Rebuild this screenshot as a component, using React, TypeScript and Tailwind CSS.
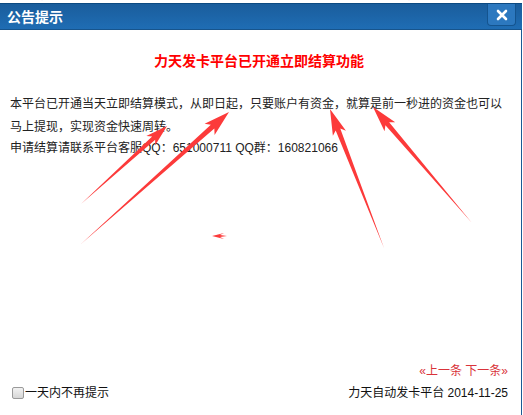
const arrows = [
  { tail: [81, 204], tip: [167, 126], head: 18, wing: 6.5 },
  { tail: [81, 244], tip: [229, 112], head: 22, wing: 7.5 },
  { tail: [384, 248], tip: [330, 109], head: 22, wing: 7 },
  { tail: [472, 223], tip: [373, 107], head: 22, wing: 7 },
  { tail: [227, 236], tip: [212, 236], head: 8, wing: 3 },
];

function arrowPoints(tail: number[], tip: number[], head: number, wing: number) {
  const dx = tip[0] - tail[0];
  const dy = tip[1] - tail[1];
  const len = Math.hypot(dx, dy);
  const ux = dx / len;
  const uy = dy / len;
  const nx = -uy;
  const ny = ux;
  const shaft = wing * 0.35;
  const bx = tip[0] - ux * head;
  const by = tip[1] - uy * head;
  const wx = tip[0] - ux * (head + 4);
  const wy = tip[1] - uy * (head + 4);
  const pts = [
    [tail[0], tail[1]],
    [bx + nx * shaft, by + ny * shaft],
    [wx + nx * wing, wy + ny * wing],
    [tip[0], tip[1]],
    [wx - nx * wing, wy - ny * wing],
    [bx - nx * shaft, by - ny * shaft],
  ];
  return pts.map((p) => p.join(",")).join(" ");
}

export default function App() {
  return (
    <div className="relative h-[415px] w-[523px] overflow-hidden bg-white font-['Liberation_Sans','Noto_Sans_CJK_SC',sans-serif] text-[12px] text-[#222]">
      {/* page behind the dialog, cut off */}
      <div className="h-[3px] overflow-hidden">
        <div className="-mt-[12px] flex whitespace-nowrap text-[12px] leading-[14px] text-black">
          <span className="w-[165px]">
            当前金额：<span className="text-[#f00]">1234</span> 元
          </span>
          <span className="w-[178px]">今日收入：1234 元</span>
          <span>上月结算金额：0 元</span>
        </div>
      </div>

      <div className="flex h-[412px] w-[522px] flex-col">
        <div className="flex h-[27px] items-start justify-between border-t border-b border-t-[#0c4a82] border-b-[#17548c] bg-gradient-to-b from-[#1a5d9c] to-[#1f6db4] pl-[7px] pr-[6px]">
          <span className="mt-[5px] text-[14px] font-bold leading-[16px] text-white">公告提示</span>
          <div className="flex h-[22px] w-[29px] items-center justify-center rounded-b-[4px] border border-t-0 border-[#14548f] bg-[#2c78bf]">
            <svg width="12" height="12" viewBox="0 0 12 12">
              <path d="M2 2 L10 10 M10 2 L2 10" stroke="white" strokeWidth="2.6" strokeLinecap="round" />
            </svg>
          </div>
        </div>

        <div className="flex flex-1 flex-col border-r border-[#1c5a94] pl-[10px] pr-[13px]">
          <div className="pt-[21px] text-center text-[14px] font-bold leading-[20px] text-[#f00]">
            力天发卡平台已开通立即结算功能
          </div>
          <p className="mt-[22px] leading-[23px]">
            本平台已开通当天立即结算模式，从即日起，只要账户有资金，就算是前一秒进的资金也可以马上提现，实现资金快速周转。
          </p>
          <div className="leading-[18px]">申请结算请联系平台客服QQ：651000711 QQ群：160821066</div>

          <div className="flex-1" />

          <div className="text-right leading-[18px] text-[#d9333a]">«上一条 下一条»</div>
          <div className="mt-[4px] mb-[13px] flex items-center justify-between leading-[18px]">
            <label className="flex items-center text-[#111]">
              <span className="ml-[2px] inline-block h-[12px] w-[12px] rounded-[2px] border border-[#9a9a9a] bg-gradient-to-b from-[#f2f2f2] to-[#d6d6d6]" />
              <span className="ml-[1px]">一天内不再提示</span>
            </label>
            <span className="text-[#111]">力天自动发卡平台 2014-11-25</span>
          </div>
        </div>
      </div>

      <svg className="pointer-events-none absolute left-0 top-0" width="523" height="415">
        {arrows.map((a, i) => (
          <polygon key={i} points={arrowPoints(a.tail, a.tip, a.head, a.wing)} fill="#fc3a3a" />
        ))}
      </svg>
    </div>
  );
}
